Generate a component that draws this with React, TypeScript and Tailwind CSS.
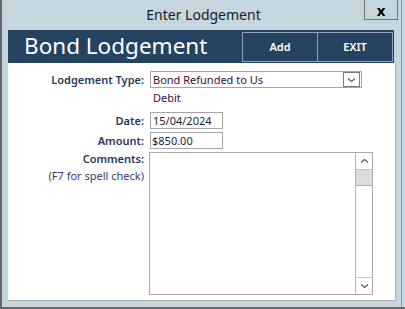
const LABEL = "text-[#27385a] font-semibold";

function Field({ label, children }: { label: string; children: React.ReactNode }) {
  return (
    <div className="flex items-center gap-[6px] h-[17px]">
      <div className={`w-[136px] text-right ${LABEL}`}>{label}</div>
      {children}
    </div>
  );
}

function Chevron({ up = false }: { up?: boolean }) {
  return (
    <svg width="9" height="6" viewBox="0 0 9 6" className={up ? "rotate-180" : ""}>
      <path d="M1 1.5 L4.5 4.5 L8 1.5" fill="none" stroke="#555" strokeWidth="1.2" />
    </svg>
  );
}

export default function App() {
  return (
    <div
      className="relative w-[405px] h-[309px] overflow-hidden bg-[#c6d6de] border-l-2 border-b-2 border-[#626870] text-[11px] leading-[14px]"
      style={{ fontFamily: '"Noto Sans", "Open Sans", sans-serif' }}
    >
      {/* title bar */}
      <div className="relative h-[30px] flex items-center justify-center text-[14px] text-[#1b1b1b]">
        Enter Lodgement
        <div className="absolute left-[362px] top-[-4px] w-[34px] h-[24px] border border-[#6e757b] flex items-center justify-center pt-[3px] text-[15px] font-bold text-black">
          x
        </div>
      </div>
      <div className="absolute left-[399px] top-0 bottom-0 w-px bg-[#8b959c]" />

      {/* window body */}
      <div className="ml-[6px] w-[388px]">
        <div className="w-[386px] h-[33px] bg-[#254360] flex items-stretch">
          <div className="flex-1 pl-[16px] flex items-center text-white text-[22.5px] leading-none pb-[1px]">
            Bond Lodgement
          </div>
          <div className="flex mt-[2px] mb-[1px] mr-[1px] border border-[#8fa2b4]">
            <div className="w-[75px] flex items-center justify-center text-white font-semibold text-[11px] border-r border-[#8fa2b4]">
              Add
            </div>
            <div className="w-[74px] flex items-center justify-center text-white font-semibold text-[11px]">
              EXIT
            </div>
          </div>
        </div>

        <div className="h-[238px] bg-white border-r border-b border-[#a8b0b5] pt-[8px] flex flex-col">
          <Field label="Lodgement Type:">
            <div className="w-[212px] h-[17px] border border-[#a6a6a6] flex items-center justify-between text-[#3a0d3c]">
              <span className="pl-[2px]">Bond Refunded to Us</span>
              <span className="w-[17px] h-[15px] mr-[1px] border border-[#7a7a7a] flex items-center justify-center">
                <Chevron />
              </span>
            </div>
          </Field>
          <div className="h-[20px] flex items-center pl-[145px] text-[#3a0d3c]">Debit</div>
          <div className="mt-[4px]">
            <Field label="Date:">
              <div className="w-[73px] h-[17px] border border-[#a6a6a6] pl-[2px] flex items-center text-[#1d1d3c]">
                15/04/2024
              </div>
            </Field>
          </div>
          <div className="mt-[3px]">
            <Field label="Amount:">
              <div className="w-[73px] h-[17px] border border-[#a6a6a6] pl-[1px] flex items-center text-[#1d1d3c]">
                $850.00
              </div>
            </Field>
          </div>
          <div className="mt-[3px] flex gap-[5px]">
            <div className="w-[136px] text-right">
              <div className={LABEL}>Comments:</div>
              <div className="mt-[3px] text-[#3a3a6a]">(F7 for spell check)</div>
            </div>
            <div className="w-[224px] h-[143px] border border-[#a9a9a9] flex justify-end">
              <div className="w-[17px] h-full border-l border-[#b5b5b5] flex flex-col">
                <div className="h-[17px] border-b border-[#c8c8c8] flex items-center justify-center">
                  <Chevron up />
                </div>
                <div className="h-[16px] bg-[#dcdcdc] border-b border-[#b0b0b0]" />
                <div className="flex-1" />
                <div className="h-[17px] border-t border-[#c8c8c8] flex items-center justify-center">
                  <Chevron />
                </div>
              </div>
            </div>
          </div>
        </div>
      </div>
    </div>
  );
}
